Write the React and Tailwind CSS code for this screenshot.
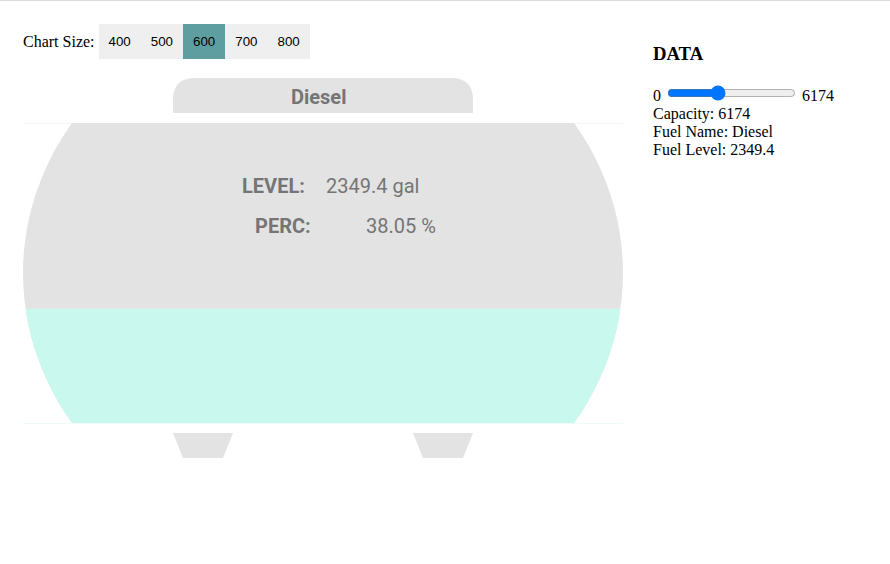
import { useState } from 'react';

const SIZES = [400, 500, 600, 700, 800];

function Tank({ name, capacity, level }) {
  const perc = (level / capacity) * 100;
  const fillTop = 423 - (300 * perc) / 100;

  return (
    <svg width="600" height="400" viewBox="23 68 600 400" className="block mt-[9px]">
      <defs>
        <clipPath id="body-clip">
          <rect x="23" y="123" width="600" height="300" />
        </clipPath>
        <clipPath id="fill-clip">
          <rect x="23" y={fillTop} width="600" height={423 - fillTop} />
        </clipPath>
      </defs>

      {/* cap */}
      <path d="M173,113 V100 Q173,78 195,78 H451 Q473,78 473,100 V113 Z" fill="#e3e3e3" />
      <text x="291" y="104" fontFamily="Roboto, sans-serif" fontWeight="700" fontSize="20" fill="#757575">
        {name}
      </text>

      {/* body */}
      <line x1="23" y1="123.5" x2="623" y2="123.5" stroke="#f4f4f4" />
      <ellipse cx="323" cy="273" rx="300" ry="274" fill="#e3e3e3" clipPath="url(#body-clip)" />
      <ellipse cx="323" cy="273" rx="300" ry="274" fill="#c9f9ee" clipPath="url(#fill-clip)" />
      <line x1="23" y1="423.5" x2="623" y2="423.5" stroke="#f0fbf8" />

      <g fontFamily="Roboto, sans-serif" fontSize="20" fill="#757575">
        <text x="242" y="193" fontWeight="700">LEVEL:</text>
        <text x="326" y="193">{level} gal</text>
        <text x="255" y="233" fontWeight="700">PERC:</text>
        <text x="366" y="233">{perc.toFixed(2)} %</text>
      </g>

      {/* legs */}
      <polygon points="173,433 233,433 223,458 183,458" fill="#e3e3e3" />
      <polygon points="413,433 473,433 463,458 423,458" fill="#e3e3e3" />
    </svg>
  );
}

export default function App() {
  const [size, setSize] = useState(600);
  const [level, setLevel] = useState(2349.4);
  const capacity = 6174;

  return (
    <div className="min-h-screen flex border-t border-[#dcdcdc] bg-white text-black font-['Liberation_Serif','Times_New_Roman',serif] text-[16px] leading-[18px]">
      <div className="pl-[23px] pt-[23px]">
        <div className="flex items-center">
          <span className="mr-[4px]">Chart Size:</span>
          {SIZES.map((s) => (
            <button
              key={s}
              onClick={() => setSize(s)}
              className={`h-[35px] px-[10px] font-['Liberation_Sans',Arial,sans-serif] text-[13.33px] ${
                size === s ? 'bg-[#5f9ea0]' : 'bg-[#efefef]'
              }`}
            >
              {s}
            </button>
          ))}
        </div>
        <Tank name="Diesel" capacity={capacity} level={level} />
      </div>

      <div className="ml-[30px] pt-[42px]">
        <h3 className="text-[18.72px] leading-[22px] font-bold">DATA</h3>
        <div className="mt-[22px] flex items-center h-[18px]">
          <span>0</span>
          <input
            type="range"
            min="0"
            max={capacity}
            step="any"
            value={level}
            onChange={(e) => setLevel(Number(e.target.value))}
            className="w-[129px] h-4 ml-[6px] mr-[6px] mt-[-6px]"
          />
          <span>{capacity}</span>
        </div>
        <div>Capacity: {capacity}</div>
        <div>Fuel Name: Diesel</div>
        <div>Fuel Level: {level}</div>
      </div>
    </div>
  );
}
